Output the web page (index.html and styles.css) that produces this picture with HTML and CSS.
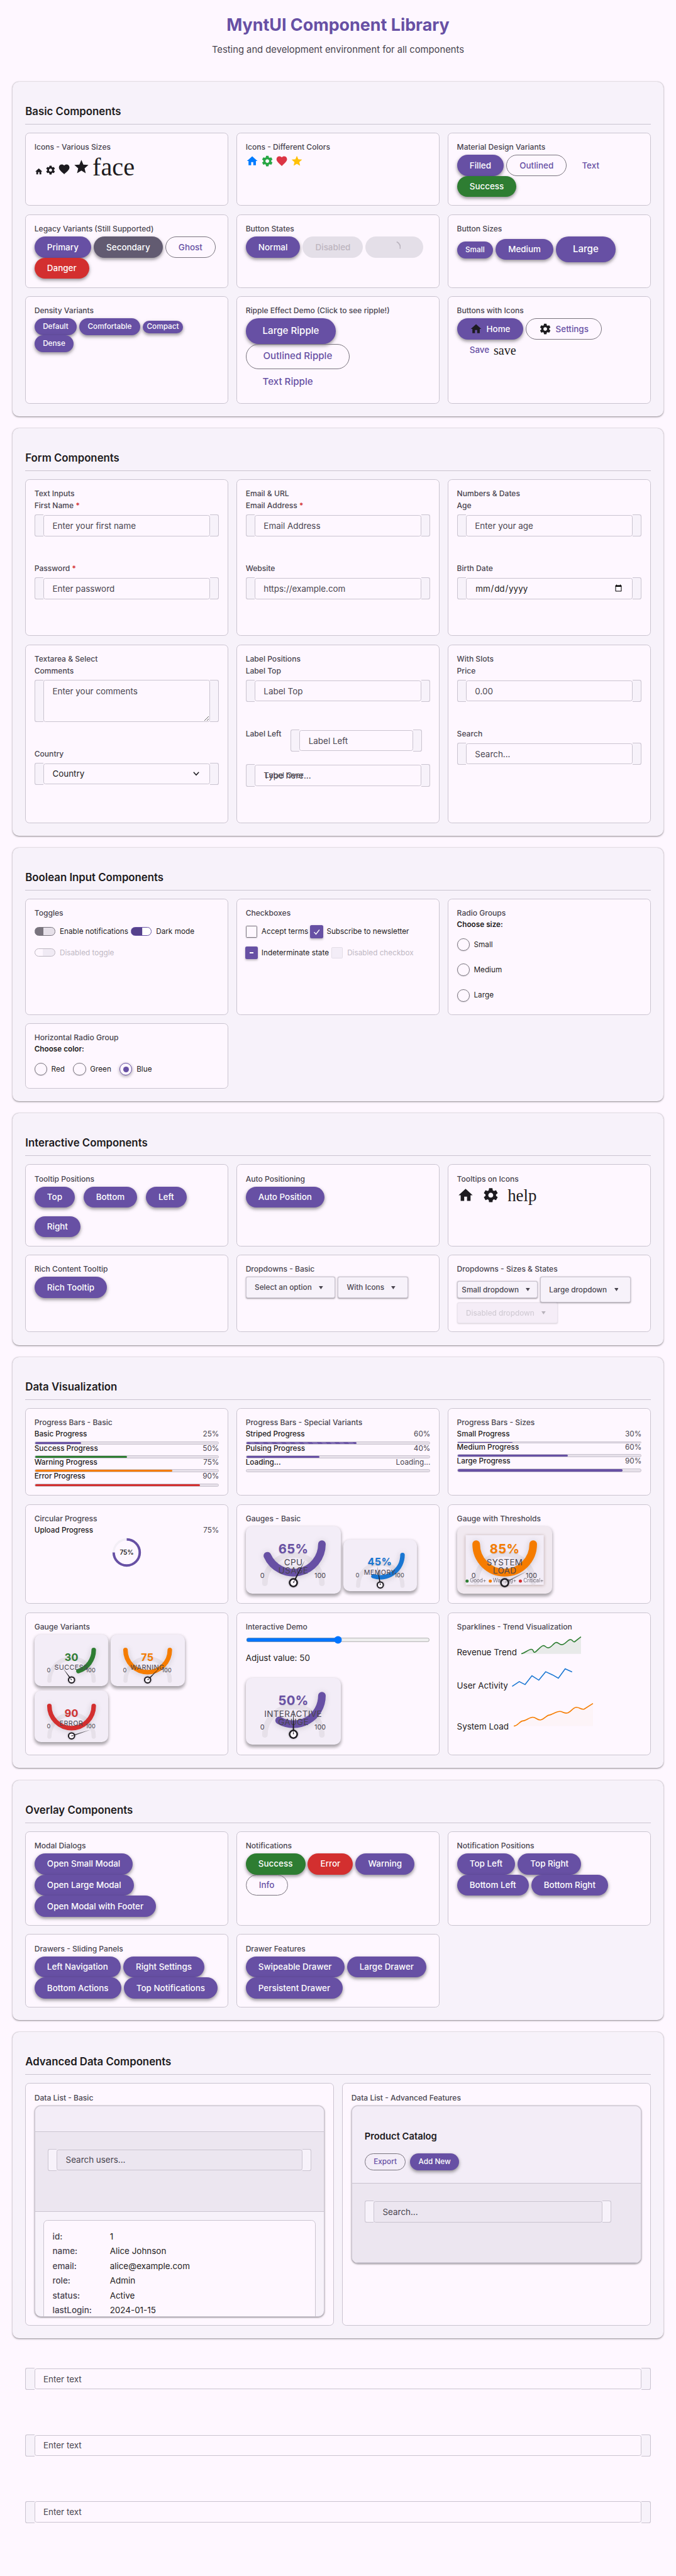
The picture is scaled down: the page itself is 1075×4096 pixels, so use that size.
FILE: index.html
```html
<!DOCTYPE html>
<html lang="en">
<head>
<meta charset="utf-8">
<title>MyntUI Component Library</title>
<link rel="stylesheet" href="styles.css">
</head>
<body>
<svg class="defs" width="0" height="0" aria-hidden="true">
  <symbol id="home" viewBox="0 0 24 24"><path d="M10 20v-6h4v6h5v-8h3L12 3 2 12h3v8z"/></symbol>
  <symbol id="gear" viewBox="0 0 24 24"><path d="M19.43 12.98c.04-.32.07-.64.07-.98s-.03-.66-.07-.98l2.11-1.65c.19-.15.24-.42.12-.64l-2-3.46c-.12-.22-.39-.3-.61-.22l-2.49 1c-.52-.4-1.08-.73-1.69-.98l-.38-2.65C14.46 2.18 14.25 2 14 2h-4c-.25 0-.46.18-.49.42l-.38 2.65c-.61.25-1.17.59-1.69.98l-2.49-1c-.23-.09-.49 0-.61.22l-2 3.46c-.13.22-.07.49.12.64l2.11 1.65c-.04.32-.07.65-.07.98s.03.66.07.98l-2.11 1.65c-.19.15-.24.42-.12.64l2 3.46c.12.22.39.3.61.22l2.49-1c.52.4 1.08.73 1.69.98l.38 2.65c.03.24.24.42.49.42h4c.25 0 .46-.18.49-.42l.38-2.65c.61-.25 1.17-.59 1.69-.98l2.49 1c.23.09.49 0 .61-.22l2-3.46c.12-.22.07-.49-.12-.64l-2.11-1.65zM12 15.5c-1.93 0-3.5-1.57-3.5-3.5s1.57-3.5 3.5-3.5 3.5 1.57 3.5 3.5-1.57 3.5-3.5 3.5z"/></symbol>
  <symbol id="heart" viewBox="0 0 24 24"><path d="M12 21.35l-1.45-1.32C5.4 15.36 2 12.28 2 8.5 2 5.42 4.42 3 7.5 3c1.74 0 3.41.81 4.5 2.09C13.09 3.81 14.76 3 16.5 3 19.58 3 22 5.42 22 8.5c0 3.78-3.4 6.86-8.55 11.54L12 21.35z"/></symbol>
  <symbol id="star" viewBox="0 0 24 24"><path d="M12 17.27L18.18 21l-1.64-7.03L22 9.24l-7.19-.61L12 2 9.19 8.63 2 9.24l5.46 4.73L5.82 21z"/></symbol>
</svg>

<header class="page-head">
  <h1>MyntUI Component Library</h1>
  <p>Testing and development environment for all components</p>
</header>

<section class="section">
  <h2>Basic Components</h2>
  <div class="grid rows-basic">
    <div class="card"><h3>Icons - Various Sizes</h3>
      <div class="icon-line">
        <svg class="ic s16"><use href="#home"/></svg><svg class="ic s20"><use href="#gear"/></svg><svg class="ic s24"><use href="#heart"/></svg><svg class="ic s32"><use href="#star"/></svg><span class="lig lig48">face</span>
      </div>
    </div>
    <div class="card"><h3>Icons - Different Colors</h3>
      <div class="icon-line">
        <svg class="ic s24 blue"><use href="#home"/></svg><svg class="ic s24 green"><use href="#gear"/></svg><svg class="ic s24 red"><use href="#heart"/></svg><svg class="ic s24 yellow"><use href="#star"/></svg>
      </div>
    </div>
    <div class="card"><h3>Material Design Variants</h3>
      <div class="row"><button class="btn">Filled</button><button class="btn outlined">Outlined</button><button class="btn text">Text</button><button class="btn success">Success</button></div>
    </div>
    <div class="card"><h3>Legacy Variants (Still Supported)</h3>
      <div class="row"><button class="btn">Primary</button><button class="btn secondary">Secondary</button><button class="btn outlined">Ghost</button><button class="btn danger">Danger</button></div>
    </div>
    <div class="card"><h3>Button States</h3>
      <div class="row"><button class="btn">Normal</button><button class="btn disabled">Disabled</button><button class="btn disabled loading"><svg width="24" height="24" viewBox="0 0 24 24"><path d="M16.5 1.8A11 11 0 0 1 22.8 15" fill="none" stroke="#b9b3bd" stroke-width="2"/></svg></button></div>
    </div>
    <div class="card"><h3>Button Sizes</h3>
      <div class="row"><button class="btn small drop">Small</button><button class="btn">Medium</button><button class="btn large">Large</button></div>
    </div>
    <div class="card"><h3>Density Variants</h3>
      <div class="row"><button class="btn small">Default</button><button class="btn small">Comfortable</button><button class="btn compact">Compact</button><button class="btn small">Dense</button></div>
    </div>
    <div class="card"><h3>Ripple Effect Demo (Click to see ripple!)</h3>
      <div class="row stack"><button class="btn large">Large Ripple</button><button class="btn large outlined">Outlined Ripple</button><button class="btn large text">Text Ripple</button></div>
    </div>
    <div class="card"><h3>Buttons with Icons</h3>
      <div class="row"><button class="btn with-icon"><svg class="ic s24"><use href="#home"/></svg>Home</button><button class="btn outlined with-icon"><svg class="ic s24"><use href="#gear"/></svg>Settings</button><button class="btn text with-icon">Save<span class="lig lig24">save</span></button></div>
    </div>
  </div>
</section>

<section class="section">
  <h2>Form Components</h2>
  <div class="grid rows-form">
    <div class="card"><h3>Text Inputs</h3>
      <div class="field"><label>First Name <b>*</b></label><div class="box"><i></i><input placeholder="Enter your first name"><i></i></div></div>
      <div class="field"><label>Password <b>*</b></label><div class="box"><i></i><input placeholder="Enter password"><i></i></div></div>
    </div>
    <div class="card"><h3>Email &amp; URL</h3>
      <div class="field"><label>Email Address <b>*</b></label><div class="box"><i></i><input placeholder="Email Address"><i></i></div></div>
      <div class="field"><label>Website</label><div class="box"><i></i><input placeholder="https://example.com"><i></i></div></div>
    </div>
    <div class="card"><h3>Numbers &amp; Dates</h3>
      <div class="field"><label>Age</label><div class="box"><i></i><input placeholder="Enter your age"><i></i></div></div>
      <div class="field"><label>Birth Date</label><div class="box"><i></i><input type="date"><i></i></div></div>
    </div>
    <div class="card"><h3>Textarea &amp; Select</h3>
      <div class="field tall"><label>Comments</label><div class="box"><i></i><textarea placeholder="Enter your comments"></textarea><i></i></div></div>
      <div class="field"><label>Country</label><div class="box"><i></i><div class="select">Country<svg width="12" height="8" viewBox="0 0 12 8"><path d="M1 1l5 5.3L11 1" fill="none" stroke="#1d1b20" stroke-width="1.8"/></svg></div><i></i></div></div>
    </div>
    <div class="card"><h3>Label Positions</h3>
      <div class="field"><label>Label Top</label><div class="box"><i></i><input placeholder="Label Top"><i></i></div></div>
      <div class="field left"><label>Label Left</label><div class="box"><i></i><input placeholder="Label Left"><i></i></div></div>
      <div class="field over"><div class="box"><i></i><input placeholder="Type here..."><i></i></div><label>Label Over</label></div>
    </div>
    <div class="card"><h3>With Slots</h3>
      <div class="field"><label>Price</label><div class="box"><i></i><input placeholder="0.00"><i></i></div></div>
      <div class="field"><label>Search</label><div class="box"><i></i><input placeholder="Search..."><i></i></div></div>
    </div>
  </div>
</section>

<section class="section">
  <h2>Boolean Input Components</h2>
  <div class="grid rows-bool">
    <div class="card"><h3>Toggles</h3>
      <div class="opts"><span class="opt"><i class="toggle"></i>Enable notifications</span><span class="opt"><i class="toggle on"></i>Dark mode</span></div>
      <div class="opts"><span class="opt off"><i class="toggle dis"></i>Disabled toggle</span></div>
    </div>
    <div class="card"><h3>Checkboxes</h3>
      <div class="opts"><span class="opt"><i class="check"></i>Accept terms</span><span class="opt"><i class="check on"><svg width="16" height="16" viewBox="0 0 16 16"><path d="M3 8.5l3.5 4L13 4" fill="none" stroke="#fff" stroke-width="1.7"/></svg></i>Subscribe to newsletter</span></div>
      <div class="opts"><span class="opt"><i class="check on"><em class="dash"></em></i>Indeterminate state</span><span class="opt off"><i class="check dis"></i>Disabled checkbox</span></div>
    </div>
    <div class="card"><h3>Radio Groups</h3>
      <div class="legend">Choose size:</div>
      <div class="radios col"><span class="opt"><i class="radio"></i>Small</span><span class="opt"><i class="radio"></i>Medium</span><span class="opt"><i class="radio"></i>Large</span></div>
    </div>
    <div class="card"><h3>Horizontal Radio Group</h3>
      <div class="legend">Choose color:</div>
      <div class="radios"><span class="opt"><i class="radio"></i>Red</span><span class="opt"><i class="radio"></i>Green</span><span class="opt"><i class="radio on"></i>Blue</span></div>
    </div>
  </div>
</section>

<section class="section">
  <h2>Interactive Components</h2>
  <div class="grid rows-inter">
    <div class="card"><h3>Tooltip Positions</h3>
      <div class="row wide"><button class="btn">Top</button><button class="btn">Bottom</button><button class="btn">Left</button><button class="btn">Right</button></div>
    </div>
    <div class="card"><h3>Auto Positioning</h3><div class="row"><button class="btn">Auto Position</button></div></div>
    <div class="card"><h3>Tooltips on Icons</h3>
      <div class="icon-line tips"><svg class="ic s32"><use href="#home"/></svg><svg class="ic s32"><use href="#gear"/></svg><span class="lig lig32">help</span></div>
    </div>
    <div class="card"><h3>Rich Content Tooltip</h3><div class="row"><button class="btn">Rich Tooltip</button></div></div>
    <div class="card"><h3>Dropdowns - Basic</h3>
      <div class="row"><span class="dd">Select an option<svg width="8" height="6"><path d="M0 0h8L4 6z"/></svg></span><span class="dd">With Icons<svg width="8" height="6"><path d="M0 0h8L4 6z"/></svg></span></div>
    </div>
    <div class="card"><h3>Dropdowns - Sizes &amp; States</h3>
      <div class="row"><span class="dd dd-sm">Small dropdown<svg width="8" height="6"><path d="M0 0h8L4 6z"/></svg></span><span class="dd dd-lg">Large dropdown<svg width="8" height="6"><path d="M0 0h8L4 6z"/></svg></span><span class="dd dd-dis">Disabled dropdown<svg width="8" height="6"><path d="M0 0h8L4 6z"/></svg></span></div>
    </div>
  </div>
</section>

<section class="section">
  <h2>Data Visualization</h2>
  <div class="grid rows-viz">
    <div class="card"><h3>Progress Bars - Basic</h3>
      <div class="prog"><p>Basic Progress<span>25%</span></p><div class="bar"><i style="width:25%"></i></div></div>
      <div class="prog"><p>Success Progress<span>50%</span></p><div class="bar"><i class="f-success" style="width:50%"></i></div></div>
      <div class="prog"><p>Warning Progress<span>75%</span></p><div class="bar"><i class="f-warning" style="width:75%"></i></div></div>
      <div class="prog"><p>Error Progress<span>90%</span></p><div class="bar"><i class="f-error" style="width:90%"></i></div></div>
    </div>
    <div class="card"><h3>Progress Bars - Special Variants</h3>
      <div class="prog"><p>Striped Progress<span>60%</span></p><div class="bar"><i class="f-striped" style="width:60%"></i></div></div>
      <div class="prog"><p>Pulsing Progress<span>40%</span></p><div class="bar"><i style="width:40%"></i></div></div>
      <div class="prog"><p>Loading...<span>Loading...</span></p><div class="bar"></div></div>
    </div>
    <div class="card"><h3>Progress Bars - Sizes</h3>
      <div class="prog"><p>Small Progress<span>30%</span></p><div class="bar thin"><i style="width:30%"></i></div></div>
      <div class="prog"><p>Medium Progress<span>60%</span></p><div class="bar"><i style="width:60%"></i></div></div>
      <div class="prog"><p>Large Progress<span>90%</span></p><div class="bar thick"><i style="width:90%"></i></div></div>
    </div>

    <div class="card"><h3>Circular Progress</h3>
      <div class="prog"><p>Upload Progress<span>75%</span></p></div>
      <svg class="ring" width="56" height="56" viewBox="0 0 56 56"><circle cx="28" cy="28" r="24.7" fill="none" stroke="#f3eff6" stroke-width="4"/><path d="M28 3.3A24.7 24.7 0 1 1 3.3 28" fill="none" stroke="#6750a4" stroke-width="4.6"/><text x="28" y="32.2" text-anchor="middle">75%</text></svg>
    </div>
    <div class="card"><h3>Gauges - Basic</h3>
      <div class="gauges">
        <svg class="gauge" width="180" height="127" viewBox="0 0 180 127"><path class="g-track" stroke-width="10.5" d="M36 108A54 54 0 0 1 144 108"/><path class="g-val" stroke="#6750a4" stroke-width="14.4" d="M144 33.7A54 54 0 0 1 40.7 55.7"/><text class="gv" x="90" y="51.7" fill="#6750a4">65%</text><text class="gl" x="90" y="73.7">CPU</text><text class="gl" x="90" y="89.7">USAGE</text><text class="gt" x="31" y="98">0</text><text class="gt" x="140.6" y="98">100</text><g transform="translate(90 106.7)"><path class="needle" d="M-1.5 0L0-48 1.5 0z" transform="rotate(27)"/><circle class="pivot" r="7.2" stroke-width="3"/><path class="needle" d="M-1 0L0-7 1 0z" transform="rotate(27)"/></g></svg>
        <svg class="gauge sm" width="140" height="98" viewBox="0 0 140 98"><path class="g-track" stroke-width="8" d="M28 87.3A42 42 0 0 1 112 87.3"/><path class="g-val" stroke="#1976d2" stroke-width="8.6" d="M112 29.3A42 42 0 0 1 57 69.2"/><text class="gv" x="69" y="49.3" fill="#1976d2">45%</text><text class="gl" x="69" y="66.3">MEMORY</text><text class="gt" x="26.6" y="72">0</text><text class="gt" x="106" y="72">100</text><g transform="translate(70 86)"><path class="needle" d="M-1.2 0L0-37 1.2 0z" transform="rotate(-9)"/><circle class="pivot" r="5.7" stroke-width="2.4"/><path class="needle" d="M-1 0L0-5 1 0z" transform="rotate(-9)"/></g></svg>
      </div>
    </div>
    <div class="card"><h3>Gauge with Thresholds</h3>
      <div class="gauges">
        <svg class="gauge warn" width="180" height="127" viewBox="0 0 180 127"><rect class="g-panel" x="16" y="16.7" width="148" height="94"/><path class="g-track" stroke-width="10.5" d="M36 106A54 54 0 0 1 144 106"/><path class="g-val" stroke="#f57c00" stroke-width="14.4" d="M144 33.7A54 54 0 0 1 36 33.7"/><text class="gv" x="90" y="51.7" fill="#f57c00">85%</text><text class="gl" x="90" y="73.7">SYSTEM</text><text class="gl" x="90" y="89.7">LOAD</text><text class="gt" x="31" y="98">0</text><text class="gt" x="140.6" y="98">100</text><circle cx="18.8" cy="103.5" r="3" fill="#2e7d32"/><circle cx="62.7" cy="103.5" r="3" fill="#f57c00"/><circle cx="119.7" cy="103.5" r="3" fill="#d32f2f"/><text class="gk" x="24" y="106.3" textLength="31">Good+</text><text class="gk" x="67.7" y="106.3" textLength="44.5">Warning+</text><text class="gk" x="125.4" y="106.3" textLength="38.5">Critical+</text><g transform="translate(90 106.7)"><path class="needle" opacity=".5" d="M-1.5 0L0-48 1.5 0z" transform="rotate(63)"/><circle class="pivot see-through" r="7.2" stroke-width="3"/></g></svg>
      </div>
    </div>

    <div class="card"><h3>Gauge Variants</h3>
      <div class="gauges variants">
        <svg class="gauge sm" width="140" height="98" viewBox="0 0 140 98"><path class="g-track" stroke-width="8" d="M28 87.3A42 42 0 0 1 112 87.3"/><path class="g-val" stroke="#2e7d32" stroke-width="8.6" d="M112 29.3A42 42 0 0 1 83 69.2"/><text class="gv" x="70" y="49.5" fill="#2e7d32">30</text><text class="gl" x="69.5" y="66.5">SUCCESS</text><text class="gt" x="26.6" y="72">0</text><text class="gt" x="106" y="72">100</text><g transform="translate(70 86)"><path class="needle" d="M-1.2 0L0-28 1.2 0z" transform="rotate(-36)"/><circle class="pivot" r="5.7" stroke-width="2.4"/><path class="needle" d="M-1 0L0-5 1 0z" transform="rotate(-36)"/></g></svg>
        <svg class="gauge sm" width="140" height="98" viewBox="0 0 140 98"><path class="g-track" stroke-width="8" d="M28 87.3A42 42 0 0 1 112 87.3"/><path class="g-val" stroke="#f57c00" stroke-width="8.6" d="M112 29.3A42 42 0 0 1 28 29.3"/><text class="gv" x="69.5" y="49.5" fill="#f57c00">75</text><text class="gl" x="69.5" y="66.5">WARNING</text><text class="gt" x="26.6" y="72">0</text><text class="gt" x="106" y="72">100</text><g transform="translate(70 86)"><path class="needle" d="M-1.2 0L0-32 1.2 0z" transform="rotate(45)"/><circle class="pivot" r="5.7" stroke-width="2.4"/><path class="needle" d="M-1 0L0-5 1 0z" transform="rotate(45)"/></g></svg>
        <svg class="gauge sm" width="140" height="98" viewBox="0 0 140 98"><path class="g-track" stroke-width="8" d="M28 87.3A42 42 0 0 1 112 87.3"/><path class="g-val" stroke="#d32f2f" stroke-width="8.6" d="M112 29.3A42 42 0 0 1 28 29.3"/><text class="gv" x="70" y="49.5" fill="#d32f2f">90</text><text class="gl" x="69.5" y="66.5">ERROR</text><text class="gt" x="26.6" y="72">0</text><text class="gt" x="106" y="72">100</text><g transform="translate(70 86)"><path class="needle" opacity=".7" d="M-1.2 0L0-38 1.2 0z" transform="rotate(72)"/><circle class="pivot" r="5.7" stroke-width="2.4"/><path class="needle" d="M-1 0L0-5 1 0z" transform="rotate(72)"/></g></svg>
      </div>
    </div>
    <div class="card"><h3>Interactive Demo</h3>
      <input class="range" type="range" min="0" max="100" value="50">
      <p class="adjust">Adjust value: 50</p>
      <svg class="gauge" width="180" height="127" viewBox="0 0 180 127"><path class="g-track" stroke-width="10.5" d="M36 108A54 54 0 0 1 144 108"/><path class="g-val" stroke="#6750a4" stroke-width="14.4" d="M144 33.7A54 54 0 0 1 63 80.5"/><text class="gv" x="90" y="51.7" fill="#6750a4">50%</text><text class="gl" x="89.5" y="73.7">INTERACTIVE</text><text class="gl" x="90" y="89.7">GAUGE</text><text class="gt" x="31" y="98">0</text><text class="gt" x="140.6" y="98">100</text><g transform="translate(90 106.7)"><path class="needle" d="M-1.5 0L0-48 1.5 0z"/><circle class="pivot" r="7.2" stroke-width="3"/><path class="needle" d="M-1 0L0-7 1 0z"/></g></svg>
    </div>
    <div class="card"><h3>Sparklines - Trend Visualization</h3>
      <div class="spark sp1"><span>Revenue Trend</span><svg width="116" height="40" viewBox="0 0 116 40"><path d="M0 34C6 33 12 27 18 25.7S22 33 26 31 36 20 41 18.7 46 24 52 22.7 61 13.5 66 12.7 72 18 78 16.7 87 8.5 92 7.3 98 13 101 11.3L113 2V34.3H0z" fill="#e8eae9"/><path d="M0 34C6 33 12 27 18 25.7S22 33 26 31 36 20 41 18.7 46 24 52 22.7 61 13.5 66 12.7 72 18 78 16.7 87 8.5 92 7.3 98 13 101 11.3L113 2" fill="none" stroke="#2e7d32" stroke-width="1.9"/></svg></div>
      <div class="spark sp2"><span>User Activity</span><svg width="116" height="40" viewBox="0 0 116 40"><path d="M.5 35L14 26 25 31.7 38 15 51 23.3 64 7.3 77 13.3 88 19.7 101 1.7 114 7.7" fill="none" stroke="#1976d2" stroke-width="1.9"/></svg></div>
      <div class="spark sp3"><span>System Load</span><svg width="152" height="50" viewBox="0 0 152 50"><path d="M0 44.7H7L17 35 36 28 51 33 67 24 87 17 101 20 118 9.3 133 12.7 150 2V44.7z" fill="#fbf1f4" opacity=".6"/><path d="M0 44.7C8 44.5 11 35.5 17 35S30 28 36 28 45 34 51 33 62 24.6 67 24 81 17 87 17 95 21 101 20 112 10 118 9.3 127 14 133 12.7L150 2" fill="none" stroke="#f57c00" stroke-width="1.9"/></svg></div>
    </div>
  </div>
</section>

<section class="section">
  <h2>Overlay Components</h2>
  <div class="grid rows-over">
    <div class="card"><h3>Modal Dialogs</h3><div class="row stack"><button class="btn">Open Small Modal</button><button class="btn">Open Large Modal</button><button class="btn">Open Modal with Footer</button></div></div>
    <div class="card"><h3>Notifications</h3><div class="row"><button class="btn success">Success</button><button class="btn danger">Error</button><button class="btn">Warning</button><button class="btn outlined">Info</button></div></div>
    <div class="card"><h3>Notification Positions</h3><div class="row"><button class="btn">Top Left</button><button class="btn">Top Right</button><button class="btn">Bottom Left</button><button class="btn">Bottom Right</button></div></div>
    <div class="card"><h3>Drawers - Sliding Panels</h3><div class="row"><button class="btn">Left Navigation</button><button class="btn">Right Settings</button><button class="btn">Bottom Actions</button><button class="btn">Top Notifications</button></div></div>
    <div class="card"><h3>Drawer Features</h3><div class="row"><button class="btn">Swipeable Drawer</button><button class="btn">Large Drawer</button><button class="btn">Persistent Drawer</button></div></div>
  </div>
</section>

<section class="section">
  <h2>Advanced Data Components</h2>
  <div class="grid rows-adv">
    <div class="card"><h3>Data List - Basic</h3>
      <div class="list fixed">
        <div class="list-head"></div>
        <div class="list-search"><div class="box"><i></i><input placeholder="Search users..."><i></i></div></div>
        <dl class="record"><dt>id:</dt><dd>1</dd><dt>name:</dt><dd>Alice Johnson</dd><dt>email:</dt><dd>alice@example.com</dd><dt>role:</dt><dd>Admin</dd><dt>status:</dt><dd>Active</dd><dt>lastLogin:</dt><dd>2024-01-15</dd></dl>
      </div>
    </div>
    <div class="card"><h3>Data List - Advanced Features</h3>
      <div class="list adv">
        <div class="list-head"><h4>Product Catalog</h4><div class="row actions"><button class="btn small outlined">Export</button><button class="btn small">Add New</button></div></div>
        <div class="list-search"><div class="box"><i></i><input placeholder="Search..."><i></i></div></div>
      </div>
    </div>
  </div>
</section>

<div class="loose">
  <div class="box"><i></i><input placeholder="Enter text"><i></i></div>
  <div class="box"><i></i><input placeholder="Enter text"><i></i></div>
  <div class="box"><i></i><input placeholder="Enter text"><i></i></div>
</div>
</body>
</html>
```
FILE: styles.css
```css
html { background: #fef7ff; }
* { box-sizing: border-box; }
body { zoom: 0.8398; height: 4876px; overflow: hidden; margin: 0; padding: 0 24px; font-family: Inter, "Liberation Sans", sans-serif; font-size: 16px; color: #1d1b20; background: #fef7ff; }
h1, h2, h3, h4, p, dl, dd { margin: 0; }
i, em { font-style: normal; }
.defs { display: block; height: 0; }

.page-head { height: 154.5px; text-align: center; padding-top: 27.7px; }
.page-head h1 { font-size: 32px; line-height: 40px; font-weight: 700; color: #6750a4; }
.page-head p { font-size: 17.6px; line-height: 24px; color: #49454f; margin-top: 14px; }

.section { background: #f7f2fa; border-radius: 12px; padding: 42.7px 24px 24px; margin-bottom: 22.83px; box-shadow: 0 1px 2px rgba(0,0,0,.3), 0 1px 3px 1px rgba(0,0,0,.12); }
.section h2 { font-size: 20px; line-height: 28px; height: 38.1px; font-weight: 600; border-bottom: 1px solid #cac4d0; margin-bottom: 15.7px; }
.grid { display: grid; grid-template-columns: repeat(3, 1fr); gap: 16px; }
.rows-basic { grid-template-rows: 139px 139px 203px; }
.rows-form { grid-template-rows: 297px 338px; }
.rows-bool { grid-template-rows: 220px 124px; }
.rows-inter { grid-template-rows: 155px 147px; }
.rows-viz { grid-template-rows: 166px 189px 271px; }
.rows-over { grid-template-rows: 179px 139px; }
.rows-adv { grid-template-columns: 1fr 1fr; grid-template-rows: 459px; }
.card { min-width: 0; background: #fef7ff; border: 1px solid #cac4d0; border-radius: 8px; padding: 16px; }
.card h3 { font-size: 14.4px; line-height: 21.5px; height: 25px; font-weight: 500; color: #49454f; white-space: nowrap; }

.icon-line { display: flex; align-items: baseline; gap: 4.5px; }
.icon-line.tips { gap: 16px; }
.ic { display: block; flex: none; fill: #1d1b20; }
.s16 { width: 16px; height: 16px; }
.s20 { width: 20px; height: 20px; }
.s24 { width: 24px; height: 24px; }
.s32 { width: 32px; height: 32px; }
.blue { fill: #007bff; }
.green { fill: #28a745; }
.red { fill: #dc3545; }
.yellow { fill: #ffc107; }
.lig { font-family: "Liberation Serif", serif; font-weight: 400; color: #1d1b20; }
.lig48 { font-size: 48px; line-height: 48px; }
.lig32 { font-size: 32px; line-height: 32px; margin-top: 0; transform: translateY(-5px); }
.lig24 { font-size: 24px; line-height: 24px; }

.row { display: flex; flex-wrap: wrap; align-items: center; column-gap: 4.7px; }
.row.wide { gap: 16px; }
.row.stack { flex-direction: column; align-items: flex-start; }
.btn { flex: none; display: inline-flex; align-items: center; justify-content: center; height: 40px; padding: 0 24px; border: 0; border-radius: 24px; background: #6750a4; color: #fff; font: 500 16px/20px Inter, sans-serif; white-space: nowrap; box-shadow: 0 3px 5px rgba(0,0,0,.28), 0 3px 8px 1px rgba(0,0,0,.15); }
.btn.outlined { background: transparent; border: 1px solid #79747e; color: #6750a4; box-shadow: none; }
.btn.text { background: transparent; color: #6750a4; box-shadow: none; }
.btn.success { background: #2e7d32; }
.btn.secondary { background: #625b71; }
.btn.danger { background: #d32f2f; }
.btn.disabled { background: #e4dfe8; color: #bdb5bf; box-shadow: none; }
.btn.loading { width: 108.5px; }
.btn.small { height: 32px; padding: 0 16px; font-size: 14px; }
.btn.drop { margin-top: 2px; }
.btn.compact { height: 24px; padding: 0 8px; font-size: 14px; }
.btn.large { height: 48px; padding: 0 32px; font-size: 18px; }
.btn.with-icon { gap: 8px; }

.field { height: 119px; }
.field.tall { height: 157px; }
.field label { display: block; font-size: 14.4px; line-height: 15.5px; height: 25px; font-weight: 500; color: #49454f; white-space: nowrap; }
.field label b { color: #d32f2f; font-weight: 500; }
.box { display: flex; align-items: center; height: 42px; }
.box > i { flex: none; align-self: stretch; width: 17px; background: #f7f2fa; border: 1px solid #cac4d0; border-right: 0; border-radius: 4px 0 0 4px; }
.box > i:last-child { border: 1px solid #cac4d0; border-left: 0; border-radius: 0 4px 4px 0; }
.box input, .select { flex: 1; min-width: 0; height: 40px; margin: 0; padding: 0 16px; border: 1px solid #cac4d0; border-radius: 4px; background: transparent; font: 400 16px/20px Inter, sans-serif; color: #1d1b20; }
.box input::placeholder, .box textarea::placeholder { color: #49454f; opacity: 1; }
.tall .box { height: 80px; }
.box textarea { flex: 1; min-width: 0; height: 80px; margin: 0; padding: 10px 16px; border: 1px solid #cac4d0; border-radius: 4px; background: transparent; font: 400 16px/22px Inter, sans-serif; }
.select { display: flex; align-items: center; justify-content: space-between; padding-right: 19px; }
.field.left { display: flex; height: 66px; }
.field.left label { width: 85px; flex: none; }
.field.left .box { width: 249px; }
.field.over { position: relative; height: 42px; }
.field.over label { position: absolute; left: 36px; top: 13px; font-weight: 400; }

.opts { display: flex; align-items: center; gap: 4.7px; height: 40px; }
.opt { display: inline-flex; align-items: center; gap: 8px; font-size: 14px; line-height: 20px; white-space: nowrap; padding-top: 1px; }
.opt.off { color: #bfb8c3; }
.toggle { width: 40px; height: 16px; margin-top: -1px; border-radius: 8px; border: 2px solid #79747e; background: linear-gradient(90deg, #79747e 15px, #e6e0e9 16px); }
.toggle.on { border-color: #6750a4; background: linear-gradient(90deg, #55418c 20px, #fff 21px); }
.toggle.dis { border-color: #bcb6c0; background: linear-gradient(90deg, #fef7ff 14px, #f0eaf4 15px); }
.check { width: 22px; height: 22px; border: 2px solid #79747e; border-radius: 2px; background: #fef7ff; box-shadow: 0 1px 2px rgba(0,0,0,.15); display: flex; align-items: center; justify-content: center; }
.check.on { width: 24px; height: 24px; margin: -1px; border: 0; border-radius: 3px; background: #6750a4; box-shadow: 0 2px 4px rgba(0,0,0,.25); }
.check.dis { border-color: #e3dde7; background: #f3edf7; box-shadow: none; }
.dash { width: 8px; height: 2px; background: #fff; }
.legend { font-size: 14px; line-height: 16px; height: 33px; font-weight: 600; }
.radios { display: flex; gap: 16px; }
.radios.col { flex-direction: column; gap: 24px; }
.radios .opt { height: 24px; padding: 0; }
.radio { width: 24px; height: 24px; border: 2px solid #79747e; border-radius: 50%; background: #fef7ff; box-shadow: 0 1px 2px rgba(0,0,0,.15); display: flex; align-items: center; justify-content: center; }
.radio.on { border-color: #6750a4; box-shadow: 0 2px 5px 1px rgba(0,0,0,.25); }
.radio.on::after { content: ""; width: 11px; height: 11px; border-radius: 50%; background: #6750a4; }

.dd { display: inline-flex; align-items: center; height: 40px; padding: 0 22px 0 16px; border: 1px solid #cac4d0; border-radius: 4px; background: #f7f2fa; color: #49454f; font-size: 14px; font-weight: 500; white-space: nowrap; box-shadow: 0 1px 2px rgba(0,0,0,.28), 0 1px 3px 1px rgba(0,0,0,.1); }
.dd svg { margin-left: 13.5px; fill: #49454f; }
.dd-sm { height: 32px; padding: 0 13px 0 8px; }
.dd-lg { height: 48px; }
.dd-dis { opacity: .38; background: #e8dfeb; color: #8a8590; }

.prog p { display: flex; justify-content: space-between; font-size: 14px; line-height: 16px; height: 20.67px; font-weight: 500; }
.prog p span { font-weight: 400; color: #49454f; }
.bar { height: 6px; border: 1px solid #cac4d0; border-radius: 3px; background: #e6e0e9; overflow: hidden; }
.bar i { display: block; height: 100%; background: #6750a4; border-radius: 0 2px 2px 0; }
.bar.thin { height: 4px; }
.bar.thick { height: 8px; border-radius: 4px; }
.bar .f-success { background: #2e7d32; }
.bar .f-warning { background: #f57c00; }
.bar .f-error { background: #d32f2f; }
.bar .f-striped { background: repeating-linear-gradient(45deg, #6750a4 0 6px, #7d69b2 6px 12px); }
.ring { display: block; margin: .5px auto 0; }
.ring text { font-size: 12px; font-weight: 600; fill: #1d1b20; }

.gauges { display: flex; flex-wrap: wrap; align-items: flex-end; column-gap: 4.7px; }
.gauge { display: block; flex: none; border-radius: 12px; background: #f3edf7; box-shadow: 0 4px 6px rgba(0,0,0,.24), 0 3px 6px 1px rgba(0,0,0,.14); }
.gauge.sm { margin-bottom: 4px; }
.gauge.warn { background: #f1e9f0; }
.variants .gauge.sm { margin-bottom: 8px; }
.g-track { fill: none; stroke: #e6e0e9; stroke-linecap: round; }
.g-val { fill: none; stroke-linecap: round; filter: drop-shadow(0 2px 6px rgba(0,0,0,.16)); }
.g-panel { fill: #f3edf7; filter: drop-shadow(0 2px 3px rgba(90,40,20,.35)); }
.gauge text { font-family: Inter, sans-serif; text-anchor: middle; }
.gauge .gv { font-size: 24px; font-weight: 700; letter-spacing: .5px; text-shadow: 0 1px 2px rgba(0,0,0,.15); }
.gauge .gl { font-size: 16px; letter-spacing: .5px; fill: #49454f; }
.gauge .gt { font-size: 12.8px; fill: #49454f; }
.gauge text.gk { font-size: 10px; text-anchor: start; fill: #49454f; opacity: .75; }
.gauge.sm .gv { font-size: 19.2px; }
.gauge.sm .gl { font-size: 12.8px; }
.gauge.sm .gt { font-size: 11px; }
.needle { fill: #1d1b20; }
.pivot { fill: #fef7ff; stroke: #1d1b20; filter: drop-shadow(0 1px 2px rgba(0,0,0,.3)); }
.pivot.see-through { fill-opacity: .6; }

.range { display: block; width: 348px; height: 16px; margin: 2px 1px; }
.adjust { line-height: 24px; margin: 9px 0 15.5px; padding-top: 5px; height: 39px; }
.spark { display: flex; align-items: flex-start; gap: 8.5px; white-space: nowrap; }
.spark span { line-height: 20px; }
.sp1 { height: 62.3px; }
.sp1 span { padding-top: 24px; }
.sp1 svg { margin-top: 1.7px; }
.sp2 { height: 65px; gap: 7px; }
.sp2 span { padding-top: 24px; }
.sp2 svg { margin-top: 1px; }
.sp3 { gap: 10px; }
.sp3 span { padding-top: 37px; }
.sp3 svg { margin-top: 1px; }

.list { border: 1px solid #cac4d0; border-radius: 12px; overflow: hidden; background: #f7f2fa; box-shadow: 0 1px 2px rgba(0,0,0,.3), 0 1px 3px 1px rgba(0,0,0,.12); }
.list.fixed { height: 400px; }
.list-head { height: 49px; background: #f3edf7; border-bottom: 1px solid #cac4d0; }
.list-search { height: 151px; padding: 32px 24px 0; background: #ece6f0; border-bottom: 1px solid #cac4d0; }
.record { display: grid; grid-template-columns: 108.5px 1fr; grid-auto-rows: 28px; margin: 16px; height: 200px; padding: 16px 16px 0; border: 1px solid #cac4d0; border-radius: 8px; background: #fef7ff; line-height: 28px; }
.record dt { font-weight: 500; color: #49454f; }
.adv { height: 299px; border-bottom-width: 2px; }
.adv .list-head { height: 147px; padding: 47px 24px 0; }
.adv h4 { font-size: 17.6px; line-height: 22px; font-weight: 600; }
.adv .actions { gap: 8px; margin-top: 21px; }
.adv .list-search { height: 150px; padding-right: 56px; }

.loose { padding: 33px 24px 0; }
.loose .box { margin-bottom: 84px; }
```
